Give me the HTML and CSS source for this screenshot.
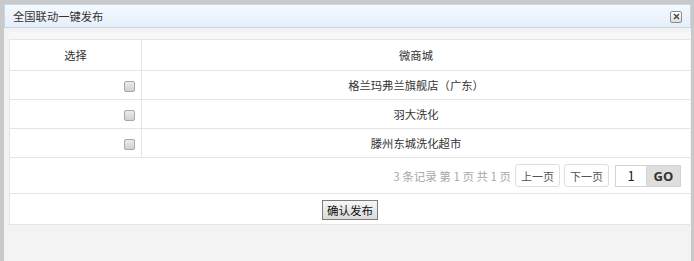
FILE: index.html
```html
<!DOCTYPE html>
<html>
<head>
    <meta charset="utf-8">
    <title>全国联动一键发布</title>
    <link rel="stylesheet" href="styles.css">
</head>
<body>
    <div class="dialog">
        <div class="dialog-title">
            <span>全国联动一键发布</span>
            <span class="close">
                <svg width="7" height="7" viewBox="0 0 7 7"><path d="M1 1L6 6M6 1L1 6" stroke="#444" stroke-width="1.4"/></svg>
            </span>
        </div>
        <div class="dialog-body">
            <div class="panel">
                <table class="shop-table">
                    <tr class="head">
                        <td class="col-check">选择</td>
                        <td>微商城</td>
                    </tr>
                    <tr class="row">
                        <td class="col-check cell-check"><span class="cb"></span></td>
                        <td>格兰玛弗兰旗舰店（广东）</td>
                    </tr>
                    <tr class="row">
                        <td class="col-check cell-check"><span class="cb"></span></td>
                        <td>羽大洗化</td>
                    </tr>
                    <tr class="row">
                        <td class="col-check cell-check"><span class="cb"></span></td>
                        <td>滕州东城洗化超市</td>
                    </tr>
                    <tr class="pager-row">
                        <td colspan="2">
                            <div class="pager">
                                <span class="pager-info">3 条记录 第 1 页 共 1 页</span>
                                <button class="page-btn">上一页</button>
                                <button class="page-btn">下一页</button>
                                <div class="page-go">
                                    <span class="page-num">1</span>
                                    <span class="go">GO</span>
                                </div>
                            </div>
                        </td>
                    </tr>
                    <tr class="foot-row">
                        <td colspan="2"><button class="confirm">确认发布</button></td>
                    </tr>
                </table>
            </div>
        </div>
    </div>
</body>
</html>
```

FILE: styles.css
```css
body {
    margin: 0;
    background: #c9c9c9;
    font-family: "Noto Sans CJK SC", "DejaVu Sans", sans-serif;
    font-size: 11.3px;
    color: #333;
    height: 261px;
    overflow: hidden;
}

.dialog {
    padding: 4px 3px 0 4px;
    height: 257px;
}

.dialog-title {
    height: 22px;
    border: 1px solid #c3d6ec;
    background: linear-gradient(#f5f9fe, #e6eef9);
    display: flex;
    justify-content: space-between;
    align-items: center;
    padding: 0 8px 0 8px;
    color: #333;
}

.close {
    width: 10px;
    height: 10px;
    border: 1px solid #8c8c8c;
    border-radius: 2px;
    background: linear-gradient(#ffffff, #dcdcdc);
    display: flex;
    justify-content: center;
    align-items: center;
    margin-top: 1px;
}

.dialog-body {
    background: #f3f3f3;
    padding: 4px 1px 0 5px;
    height: 229px;
}

.panel {
    background: #fff;
    border-top: 7px solid #f7f7f7;
}

.shop-table {
    width: 100%;
    border-collapse: collapse;
    border-left: 1px solid #e3e3e3;
}

.shop-table td {
    box-sizing: border-box;
    border-top: 1px solid #e5e5e5;
    border-bottom: 1px solid #e5e5e5;
    padding: 0;
    text-align: center;
}

.shop-table .col-check {
    width: 132px;
    border-right: 1px solid #e5e5e5;
}

.head td {
    height: 31px;
}

.row td {
    height: 29px;
}

.cell-check {
    text-align: right !important;
    padding-right: 6px !important;
}

.cb {
    display: inline-block;
    width: 9px;
    height: 9px;
    border: 1px solid #a8a8a8;
    border-radius: 2px;
    background: linear-gradient(#ececec, #d0d0d0);
    vertical-align: middle;
}

.pager-row td {
    height: 36px;
}

.pager {
    display: flex;
    justify-content: flex-end;
    align-items: center;
    padding-right: 9px;
}

.pager-info {
    color: #a8a8a8;
    margin-right: 4px;
    font-size: 11.5px;
}

.page-btn {
    width: 45px;
    height: 23px;
    padding: 0;
    border: 1px solid #dedede;
    border-radius: 3px;
    background: #fff;
    color: #555;
    font-family: inherit;
    font-size: 11px;
    margin-right: 4px;
}

.page-btn + .page-btn {
    margin-right: 6px;
}

.page-go {
    display: flex;
    height: 22px;
}

.page-num {
    width: 30px;
    border: 1px solid #d4d4d4;
    border-right: none;
    display: flex;
    justify-content: center;
    align-items: center;
    font-size: 13px;
    color: #222;
}

.go {
    width: 33px;
    background: #dedede;
    border: 1px solid #d4d4d4;
    display: flex;
    justify-content: center;
    align-items: center;
    font-family: "Open Sans", sans-serif;
    font-weight: bold;
    font-size: 13px;
    color: #333;
}

.foot-row td {
    height: 31px;
}

.confirm {
    width: 56px;
    height: 20px;
    padding: 0;
    border: 1px solid #7c7c7c;
    border-radius: 0;
    background: linear-gradient(#f6f6f6, #dadada);
    color: #111;
    font-family: inherit;
    font-size: 11.5px;
    margin-top: 2px;
}
```
